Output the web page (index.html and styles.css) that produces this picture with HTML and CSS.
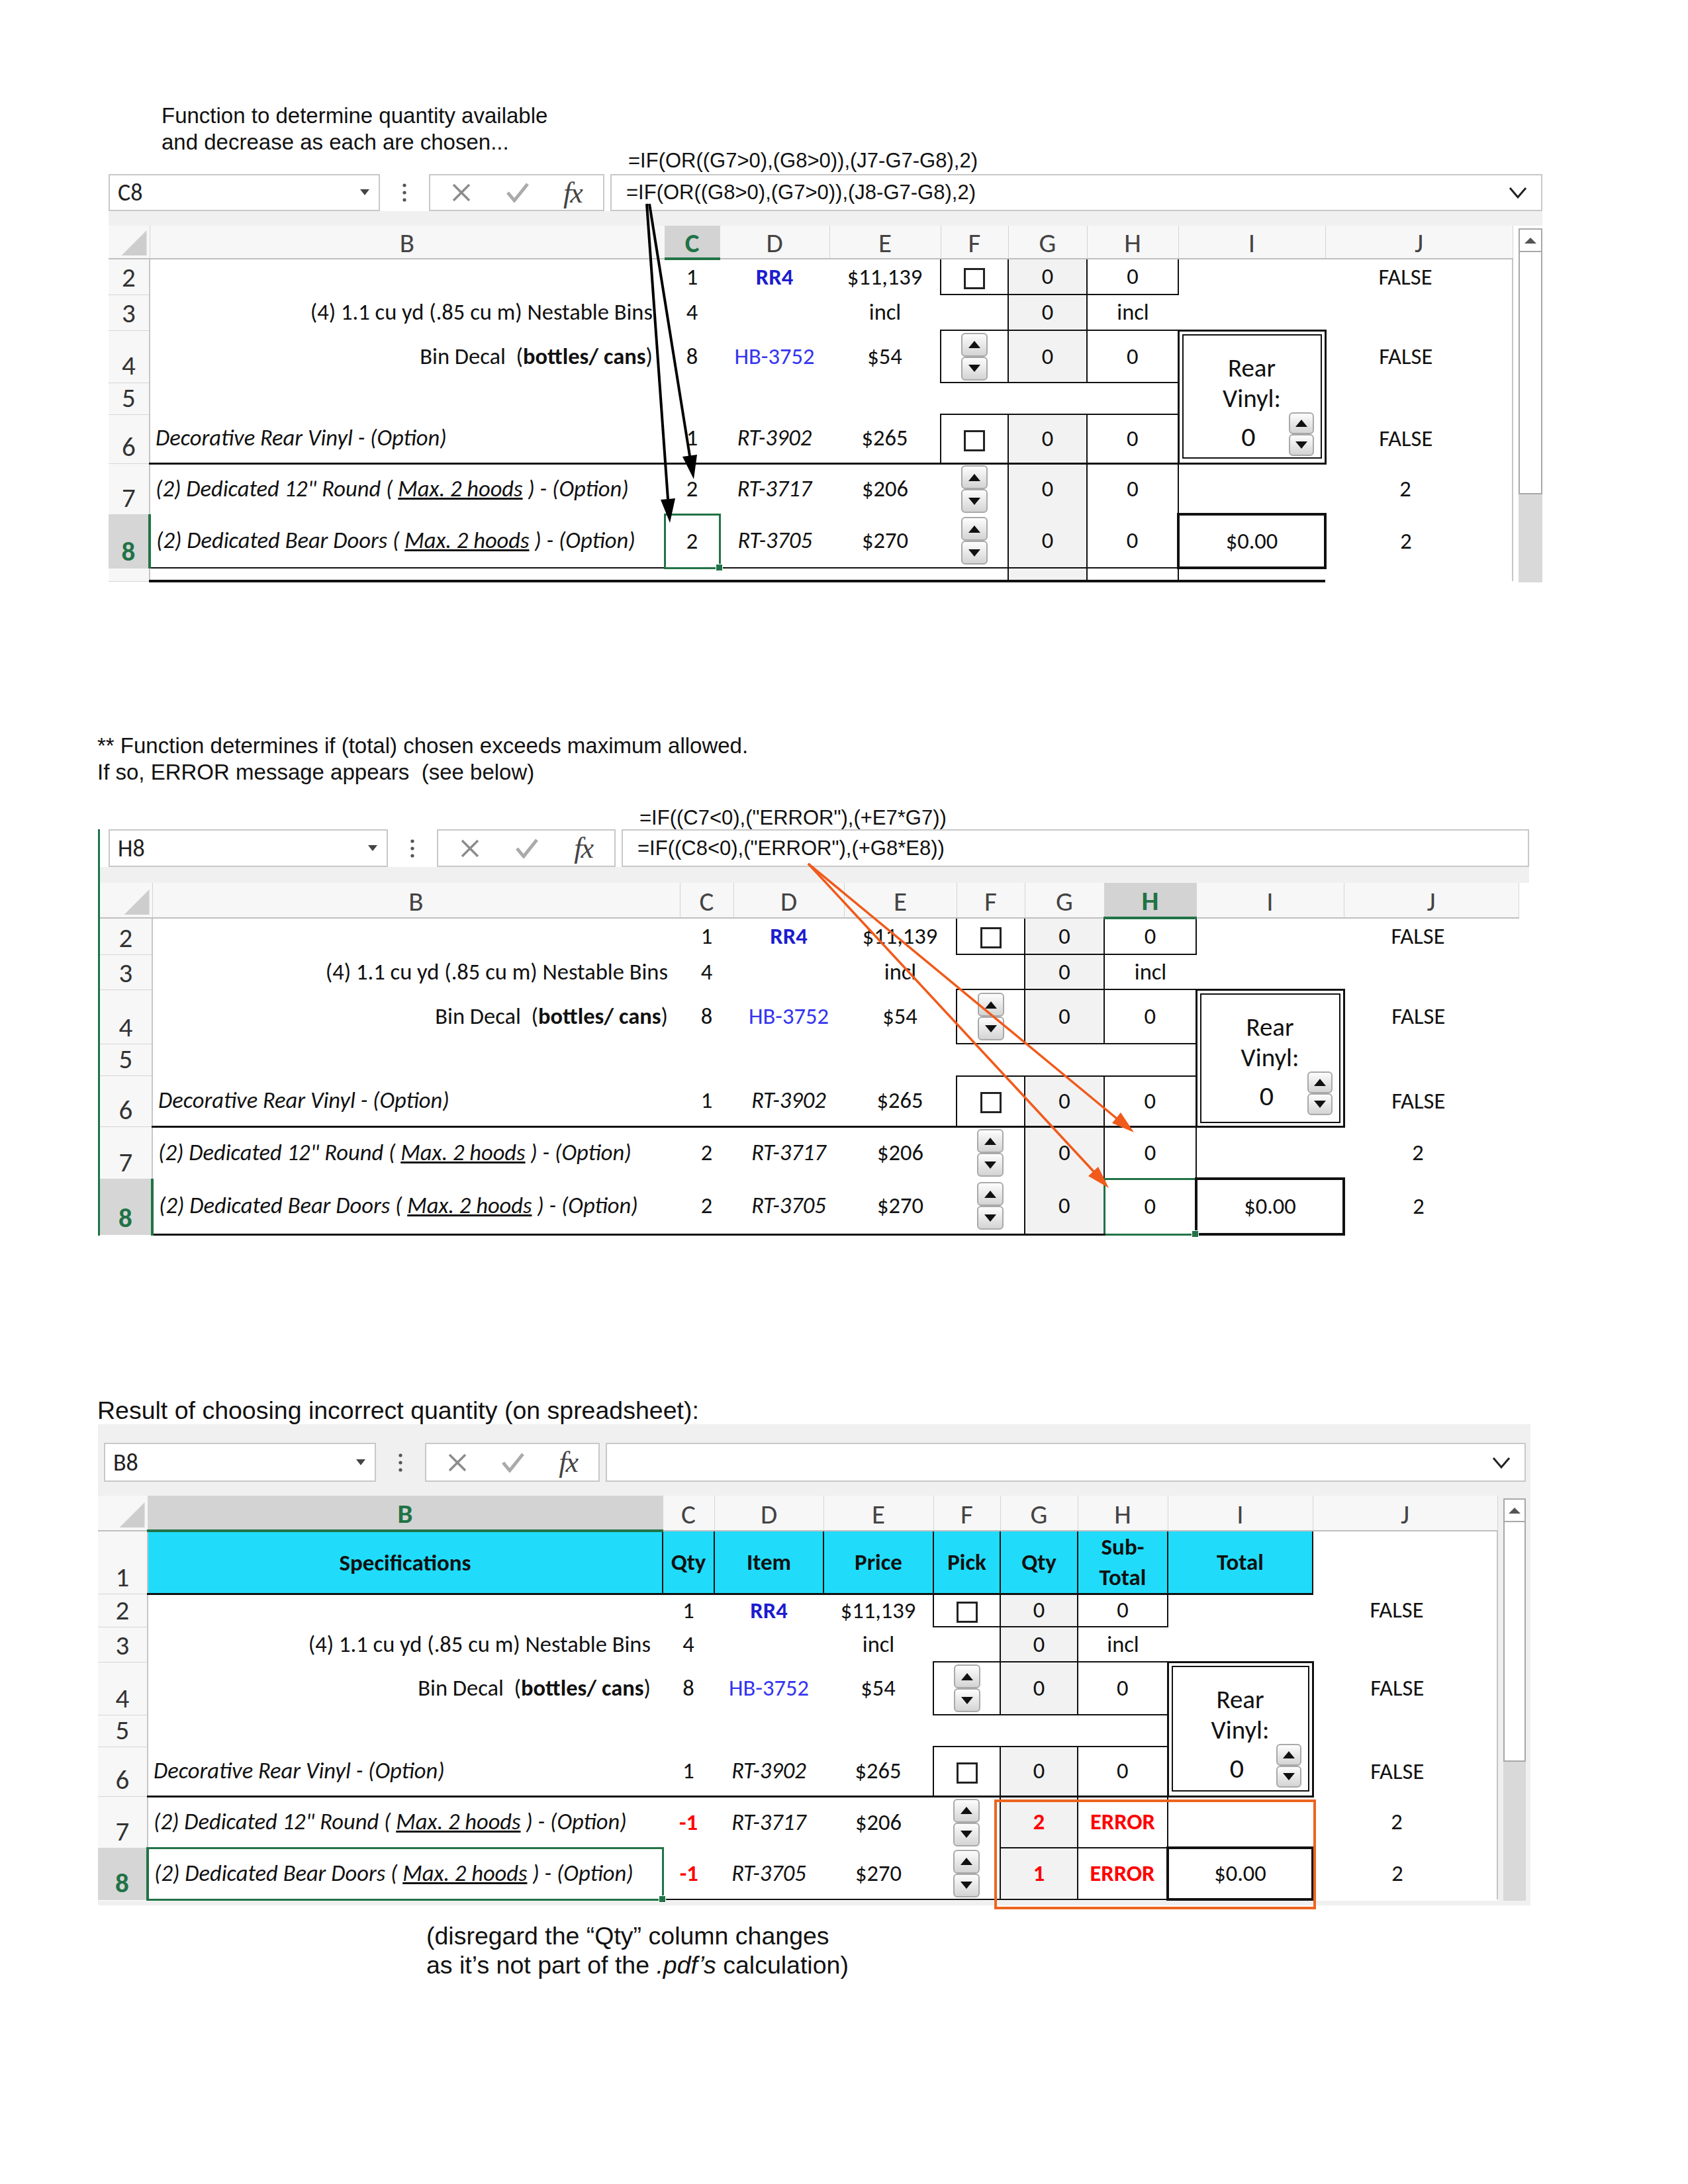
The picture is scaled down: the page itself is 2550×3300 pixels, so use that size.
FILE: index.html
```html
<!DOCTYPE html>
<html lang="en">
<head>
    <meta charset="UTF-8">
    <title>Quantity functions</title>
    <link rel="stylesheet" href="styles.css">
</head>
<body>
<div class="page">

    <!-- first sheet: quantity available -->
    <section class="s1">
        <p class="note note-1">Function to determine quantity available<br>and decrease as each are chosen...</p>
        <p class="fnote fnote-1">=IF(OR((G7&gt;0),(G8&gt;0)),(J7-G7-G8),2)</p>
        <div class="xl xl1">
            <div class="fbar">
                <div class="namebox"><span>C8</span><svg width="14" height="10" viewBox="0 0 14 10"><path d="M0 0H14L7 9Z" fill="#444"/></svg></div>
                <div class="dots"><svg width="6" height="30" viewBox="0 0 6 30"><circle cx="3" cy="4" r="2.6"/><circle cx="3" cy="15" r="2.6"/><circle cx="3" cy="26" r="2.6"/></svg></div>
                <div class="tools">
                    <svg width="30" height="30" viewBox="0 0 30 30"><path d="M3 3L27 27M27 3L3 27" stroke="#8c8c8c" stroke-width="3.5"/></svg>
                    <svg width="34" height="30" viewBox="0 0 34 30"><path d="M2 15L12 27L32 2" fill="none" stroke="#aaa" stroke-width="5"/></svg>
                    <span class="fx">fx</span>
                </div>
                <div class="finput"><span>=IF(OR((G8&gt;0),(G7&gt;0)),(J8-G7-G8),2)</span><svg width="30" height="20" viewBox="0 0 30 20"><path d="M3 3L15 17L27 3" fill="none" stroke="#222" stroke-width="3"/></svg></div>
            </div>
            <div class="strip"></div>
            <div class="grid">
                <table class="sheet">
                    <colgroup><col class="w-rn"><col class="w-b"><col class="w-c"><col class="w-d"><col class="w-e"><col class="w-f"><col class="w-g"><col class="w-h"><col class="w-i"><col class="w-j"></colgroup>
                    <tr class="hd"><th class="corner"><span class="tri"></span></th><th>B</th><th class="on">C</th><th>D</th><th>E</th><th>F</th><th>G</th><th>H</th><th>I</th><th class="je">J</th></tr>
                    <tr class="r2"><td class="rn">2</td><td></td><td>1</td><td class="rr4">RR4</td><td>$11,139</td><td class="f bl bb"><span class="chk"></span></td><td class="g bl bb">0</td><td class="bl br bb">0</td><td></td><td class="j">FALSE</td></tr>
                    <tr class="r3"><td class="rn">3</td><td class="spec">(4) 1.1 cu yd (.85 cu m) Nestable Bins</td><td>4</td><td></td><td>incl</td><td></td><td class="g bl br">0</td><td>incl</td><td></td><td class="j"></td></tr>
                    <tr class="r4"><td class="rn">4</td><td class="spec">Bin Decal&nbsp; (<b>bottles/ cans</b>)</td><td>8</td><td class="hb">HB-3752</td><td>$54</td><td class="f bl bt bb"><span class="spin"><i></i><i class="dn"></i></span></td><td class="g bl br bt bb">0</td><td class="bt bb">0</td>
                        <td class="vinyl" rowspan="3"><div class="vbox"><span>Rear</span><span>Vinyl:</span><div class="vrow"><span></span><span>0</span><span class="spin sm"><i></i><i class="dn"></i></span></div></div></td><td class="j">FALSE</td></tr>
                    <tr class="r5"><td class="rn">5</td><td></td><td></td><td></td><td></td><td></td><td></td><td></td><td class="j"></td></tr>
                    <tr class="r6"><td class="rn">6</td><td class="opt bk">Decorative Rear Vinyl - (Option)</td><td class="bk">1</td><td class="it bk">RT-3902</td><td class="bk">$265</td><td class="f bl bt bk"><span class="chk"></span></td><td class="g bl br bt bk">0</td><td class="bt bk">0</td><td class="j">FALSE</td></tr>
                    <tr class="r7"><td class="rn">7</td><td class="opt">(2) Dedicated 12" Round ( <u>Max. 2 hoods</u> ) - (Option)</td><td>2</td><td class="it">RT-3717</td><td>$206</td><td class="f"><span class="spin"><i></i><i class="dn"></i></span></td><td class="g bl br">0</td><td class="br">0</td><td></td><td class="j">2</td></tr>
                    <tr class="r8"><td class="rn on">8</td><td class="opt bb">(2) Dedicated Bear Doors ( <u>Max. 2 hoods</u> ) - (Option)</td><td class="sel bb">2</td><td class="it bb">RT-3705</td><td class="bb">$270</td><td class="f bb"><span class="spin"><i></i><i class="dn"></i></span></td><td class="g bl br bb">0</td><td class="bb">0</td><td class="tot">$0.00</td><td class="j">2</td></tr>
                    <tr class="r9"><td class="rn"></td><td class="b4"></td><td class="b4"></td><td class="b4"></td><td class="b4"></td><td class="b4"></td><td class="g bl br b4"></td><td class="br b4"></td><td class="b4"></td><td class="j"></td></tr>
                </table>
                <div class="vscroll"><div class="up"></div><div class="thumb"></div><div class="track"></div></div>
            </div>
        </div>
    </section>

    <!-- second sheet: error check -->
    <section class="s2">
        <p class="note note-2">** Function determines if (total) chosen exceeds maximum allowed.<br>If so, ERROR message appears&nbsp; (see below)</p>
        <p class="fnote fnote-2">=IF((C7&lt;0),("ERROR"),(+E7*G7))</p>
        <div class="xl xl2">
            <div class="fbar">
                <div class="namebox"><span>H8</span><svg width="14" height="10" viewBox="0 0 14 10"><path d="M0 0H14L7 9Z" fill="#444"/></svg></div>
                <div class="dots"><svg width="6" height="30" viewBox="0 0 6 30"><circle cx="3" cy="4" r="2.6"/><circle cx="3" cy="15" r="2.6"/><circle cx="3" cy="26" r="2.6"/></svg></div>
                <div class="tools">
                    <svg width="30" height="30" viewBox="0 0 30 30"><path d="M3 3L27 27M27 3L3 27" stroke="#8c8c8c" stroke-width="3.5"/></svg>
                    <svg width="34" height="30" viewBox="0 0 34 30"><path d="M2 15L12 27L32 2" fill="none" stroke="#aaa" stroke-width="5"/></svg>
                    <span class="fx">fx</span>
                </div>
                <div class="finput"><span>=IF((C8&lt;0),("ERROR"),(+G8*E8))</span></div>
            </div>
            <div class="strip"></div>
            <div class="grid">
                <table class="sheet">
                    <colgroup><col class="w-rn"><col class="w-b"><col class="w-c"><col class="w-d"><col class="w-e"><col class="w-f"><col class="w-g"><col class="w-h"><col class="w-i"><col class="w-j"></colgroup>
                    <tr class="hd"><th class="corner"><span class="tri"></span></th><th>B</th><th>C</th><th>D</th><th>E</th><th>F</th><th>G</th><th class="on">H</th><th>I</th><th>J</th></tr>
                    <tr class="r2"><td class="rn">2</td><td></td><td>1</td><td class="rr4">RR4</td><td>$11,139</td><td class="f bl bb"><span class="chk"></span></td><td class="g bl bb">0</td><td class="bl br bb">0</td><td></td><td class="j">FALSE</td></tr>
                    <tr class="r3"><td class="rn">3</td><td class="spec">(4) 1.1 cu yd (.85 cu m) Nestable Bins</td><td>4</td><td></td><td>incl</td><td></td><td class="g bl br">0</td><td>incl</td><td></td><td class="j"></td></tr>
                    <tr class="r4"><td class="rn">4</td><td class="spec">Bin Decal&nbsp; (<b>bottles/ cans</b>)</td><td>8</td><td class="hb">HB-3752</td><td>$54</td><td class="f bl bt bb"><span class="spin"><i></i><i class="dn"></i></span></td><td class="g bl br bt bb">0</td><td class="bt bb">0</td>
                        <td class="vinyl" rowspan="3"><div class="vbox"><span>Rear</span><span>Vinyl:</span><div class="vrow"><span></span><span>0</span><span class="spin sm"><i></i><i class="dn"></i></span></div></div></td><td class="j">FALSE</td></tr>
                    <tr class="r5"><td class="rn">5</td><td></td><td></td><td></td><td></td><td></td><td></td><td></td><td class="j"></td></tr>
                    <tr class="r6"><td class="rn">6</td><td class="opt bk">Decorative Rear Vinyl - (Option)</td><td class="bk">1</td><td class="it bk">RT-3902</td><td class="bk">$265</td><td class="f bl bt bk"><span class="chk"></span></td><td class="g bl br bt bk">0</td><td class="bt bk">0</td><td class="j">FALSE</td></tr>
                    <tr class="r7"><td class="rn">7</td><td class="opt">(2) Dedicated 12" Round ( <u>Max. 2 hoods</u> ) - (Option)</td><td>2</td><td class="it">RT-3717</td><td>$206</td><td class="f"><span class="spin"><i></i><i class="dn"></i></span></td><td class="g bl br">0</td><td class="br">0</td><td></td><td class="j">2</td></tr>
                    <tr class="r8"><td class="rn on">8</td><td class="opt b3">(2) Dedicated Bear Doors ( <u>Max. 2 hoods</u> ) - (Option)</td><td class="b3">2</td><td class="it b3">RT-3705</td><td class="b3">$270</td><td class="f b3"><span class="spin"><i></i><i class="dn"></i></span></td><td class="g bl b3">0</td><td class="sel">0</td><td class="tot">$0.00</td><td class="j">2</td></tr>
                </table>
            </div>
        </div>
    </section>

    <!-- third sheet: result with wrong quantity -->
    <section class="s3">
        <p class="caption">Result of choosing incorrect quantity (on spreadsheet):</p>
        <div class="xl xl3">
            <div class="fbar">
                <div class="namebox"><span>B8</span><svg width="14" height="10" viewBox="0 0 14 10"><path d="M0 0H14L7 9Z" fill="#444"/></svg></div>
                <div class="dots"><svg width="6" height="30" viewBox="0 0 6 30"><circle cx="3" cy="4" r="2.6"/><circle cx="3" cy="15" r="2.6"/><circle cx="3" cy="26" r="2.6"/></svg></div>
                <div class="tools">
                    <svg width="30" height="30" viewBox="0 0 30 30"><path d="M3 3L27 27M27 3L3 27" stroke="#8c8c8c" stroke-width="3.5"/></svg>
                    <svg width="34" height="30" viewBox="0 0 34 30"><path d="M2 15L12 27L32 2" fill="none" stroke="#aaa" stroke-width="5"/></svg>
                    <span class="fx">fx</span>
                </div>
                <div class="finput"><span></span><svg width="30" height="20" viewBox="0 0 30 20"><path d="M3 3L15 17L27 3" fill="none" stroke="#222" stroke-width="3"/></svg></div>
            </div>
            <div class="strip"></div>
            <div class="grid">
                <table class="sheet">
                    <colgroup><col class="w-rn"><col class="w-b"><col class="w-c"><col class="w-d"><col class="w-e"><col class="w-f"><col class="w-g"><col class="w-h"><col class="w-i"><col class="w-j"></colgroup>
                    <tr class="hd"><th class="corner"><span class="tri"></span></th><th class="on">B</th><th>C</th><th>D</th><th>E</th><th>F</th><th>G</th><th>H</th><th>I</th><th>J</th></tr>
                    <tr class="r1"><td class="rn">1</td><td class="cy">Specifications</td><td class="cy">Qty</td><td class="cy">Item</td><td class="cy">Price</td><td class="cy">Pick</td><td class="cy">Qty</td><td class="cy">Sub-<br>Total</td><td class="cy">Total</td><td class="j"></td></tr>
                    <tr class="r2"><td class="rn">2</td><td></td><td>1</td><td class="rr4">RR4</td><td>$11,139</td><td class="f bl bb"><span class="chk"></span></td><td class="g bl bb">0</td><td class="bl br bb">0</td><td></td><td class="j">FALSE</td></tr>
                    <tr class="r3"><td class="rn">3</td><td class="spec">(4) 1.1 cu yd (.85 cu m) Nestable Bins</td><td>4</td><td></td><td>incl</td><td></td><td class="g bl br">0</td><td>incl</td><td></td><td class="j"></td></tr>
                    <tr class="r4"><td class="rn">4</td><td class="spec">Bin Decal&nbsp; (<b>bottles/ cans</b>)</td><td>8</td><td class="hb">HB-3752</td><td>$54</td><td class="f bl bt bb"><span class="spin"><i></i><i class="dn"></i></span></td><td class="g bl br bt bb">0</td><td class="bt bb">0</td>
                        <td class="vinyl" rowspan="3"><div class="vbox"><span>Rear</span><span>Vinyl:</span><div class="vrow"><span></span><span>0</span><span class="spin sm"><i></i><i class="dn"></i></span></div></div></td><td class="j">FALSE</td></tr>
                    <tr class="r5"><td class="rn">5</td><td></td><td></td><td></td><td></td><td></td><td></td><td></td><td class="j"></td></tr>
                    <tr class="r6"><td class="rn">6</td><td class="opt bk">Decorative Rear Vinyl - (Option)</td><td class="bk">1</td><td class="it bk">RT-3902</td><td class="bk">$265</td><td class="f bl bt bk"><span class="chk"></span></td><td class="g bl br bt bk">0</td><td class="bt bk">0</td><td class="j">FALSE</td></tr>
                    <tr class="r7"><td class="rn">7</td><td class="opt">(2) Dedicated 12" Round ( <u>Max. 2 hoods</u> ) - (Option)</td><td class="red">-1</td><td class="it">RT-3717</td><td>$206</td><td class="f"><span class="spin"><i></i><i class="dn"></i></span></td><td class="g bl br red">2</td><td class="br red">ERROR</td><td></td><td class="j">2</td></tr>
                    <tr class="r8"><td class="rn on">8</td><td class="opt sel">(2) Dedicated Bear Doors ( <u>Max. 2 hoods</u> ) - (Option)</td><td class="red bb">-1</td><td class="it bb">RT-3705</td><td class="bb">$270</td><td class="f bb"><span class="spin"><i></i><i class="dn"></i></span></td><td class="g bl br bb bt red">1</td><td class="bb bt red">ERROR</td><td class="tot">$0.00</td><td class="j">2</td></tr>
                </table>
                <div class="vscroll"><div class="up"></div><div class="thumb"></div><div class="track"></div></div>
            </div>
        </div>
        <p class="after">(disregard the “Qty” column changes<br>as it’s not part of the <i>.pdf’s</i> calculation)</p>
    </section>

    <!-- arrows and highlight drawn over the sheets -->
    <svg class="marks" width="2550" height="3300" viewBox="0 0 2550 3300">
        <g stroke="#000" stroke-width="4" fill="#000">
            <line x1="981" y1="308" x2="1042" y2="689"/>
            <polygon points="1048,724 1053,687 1031,690" stroke="none"/>
            <line x1="977" y1="308" x2="1009" y2="754"/>
            <polygon points="1012,790 1020,753 998,755" stroke="none"/>
        </g>
        <g stroke="#f05a1a" stroke-width="3.5" fill="#f05a1a">
            <line x1="1221" y1="1305" x2="1687" y2="1690"/>
            <polygon points="1713,1711 1693,1681 1680,1697" stroke="none"/>
            <line x1="1221" y1="1305" x2="1652" y2="1770"/>
            <polygon points="1675,1795 1659,1763 1644,1777" stroke="none"/>
        </g>
        <rect x="1504" y="2721" width="482" height="162" fill="none" stroke="#ec6520" stroke-width="4"/>
    </svg>
</div>
</body>
</html>
```

FILE: styles.css
```css
* {
    margin: 0;
    padding: 0;
    box-sizing: border-box;
}

body {
    background: #fff;
    color: #111;
    font-family: "Liberation Sans", Arial, sans-serif;
}

.page {
    position: relative;
    width: 2550px;
    height: 3300px;
    overflow: hidden;
}

/* annotation texts */
.note {
    font-size: 33px;
    line-height: 40px;
}

.fnote {
    font-size: 31px;
    white-space: nowrap;
}

.s1 {
    padding-top: 155px;
}

.note-1 {
    margin-left: 244px;
}

.fnote-1 {
    margin: -11px 0 0 949px;
    line-height: 38px;
}

.s2 {
    margin-top: 227px;
}

.note-2 {
    margin-left: 147px;
}

.fnote-2 {
    margin: 31px 0 0 966px;
    line-height: 35px;
}

.s3 {
    margin-top: 242px;
}

.caption {
    margin-left: 147px;
    font-size: 37.5px;
    line-height: 44px;
}

.after {
    margin: 24px 0 0 644px;
    font-size: 37.5px;
    line-height: 44px;
}

/* excel window */
.xl {
    font-family: "Liberation Sans Narrow", Carlito, "DejaVu Sans Condensed", "Liberation Sans", sans-serif;
}

.xl1 {
    margin: 1px 0 0 164px;
    width: 2166px;
}

.xl2 {
    margin-left: 148px;
    width: 2162px;
    border-left: 3px solid #217346;
}

.xl3 {
    margin: -1px 0 0 148px;
    width: 2164px;
    padding: 28px 7px 7px 0;
    background: #f0f0f0;
}

.fbar {
    display: flex;
    height: 56px;
}

.xl2 .fbar {
    height: 57px;
    padding-left: 13px;
}

.xl3 .fbar {
    height: 59px;
    padding-left: 9px;
}

.namebox {
    width: 410px;
    display: flex;
    align-items: center;
    justify-content: space-between;
    padding: 0 14px 0 12px;
    background: #fff;
    border: 2px solid #c8c8c8;
    font-size: 36px;
    color: #222;
}

.xl2 .namebox {
    width: 422px;
}

.xl3 .namebox {
    width: 411px;
}

.dots {
    width: 74px;
    display: flex;
    align-items: center;
    justify-content: center;
    fill: #555;
}

.tools {
    width: 265px;
    display: flex;
    align-items: center;
    justify-content: space-around;
    padding: 0 6px;
    background: #fff;
    border: 2px solid #c8c8c8;
}

.xl2 .tools {
    width: 270px;
}

.xl3 .tools {
    width: 264px;
}

.fx {
    font-family: "Liberation Serif", serif;
    font-style: italic;
    font-size: 44px;
    color: #444;
    letter-spacing: -2px;
}

.finput {
    flex: 1;
    margin-left: 9px;
    display: flex;
    align-items: center;
    justify-content: space-between;
    padding: 0 20px 0 22px;
    background: #fff;
    border: 2px solid #c8c8c8;
    font-family: "Liberation Sans", Arial, sans-serif;
    font-size: 31px;
    color: #111;
    white-space: nowrap;
}

.strip {
    height: 22px;
    background: #f0f0f0;
}

.xl2 .strip {
    height: 24px;
}

.xl3 .strip {
    height: 21px;
}

.grid {
    display: flex;
    align-items: stretch;
    background: #fff;
}

.xl3 .grid {
    background: #f0f0f0;
}

/* sheet grid */
.sheet {
    width: 2121px;
    flex: none;
    border-collapse: collapse;
    table-layout: fixed;
    background: #fff;
    font-size: 34.5px;
    line-height: 1.1;
}

.xl2 .sheet {
    width: 2143px;
}

.xl3 .sheet {
    width: 2114px;
}

.sheet td {
    padding: 0 8px;
    text-align: center;
    vertical-align: middle;
    white-space: nowrap;
    overflow: visible;
}

.sheet th {
    height: 50px;
    font-size: 41px;
    font-weight: normal;
    color: #444;
    background: #f7f7f7;
    border-right: 1px solid #d4d4d4;
    border-bottom: 2px solid #bfbfbf;
    line-height: 1;
    padding-top: 4px;
}

.sheet th.on {
    background: #d3d3d3;
    color: #217346;
    font-weight: bold;
    border-bottom: 4px solid #217346;
}

.sheet th.corner {
    vertical-align: bottom;
    padding: 0 4px 4px 0;
}

.tri {
    display: block;
    width: 38px;
    height: 38px;
    margin-left: auto;
    background: #cdcdcd;
    clip-path: polygon(100% 0, 100% 100%, 0 100%);
}

.sheet td.rn {
    font-size: 41px;
    color: #333;
    background: #f7f7f7;
    border-right: 2px solid #c6c6c6;
    border-bottom: 1px solid #d6d6d6;
    vertical-align: bottom;
    padding: 0 0 2px;
}

.sheet td.rn.on {
    background: #d6d6d6;
    color: #217346;
    font-weight: bold;
    border-right: 4px solid #217346;
}

.w-rn { width: 62px; }
.w-b { width: 778px; }
.w-c { width: 83px; }
.w-d { width: 166px; }
.w-e { width: 168px; }
.w-f { width: 102px; }
.w-g { width: 119px; }
.w-h { width: 138px; }
.w-i { width: 222px; }
.w-j { width: 283px; }

.xl2 .w-rn { width: 79px; }
.xl2 .w-b { width: 797px; }
.xl2 .w-c { width: 81px; }
.xl2 .w-d { width: 167px; }
.xl2 .w-e { width: 170px; }
.xl2 .w-f { width: 103px; }
.xl2 .w-g { width: 120px; }
.xl2 .w-h { width: 139px; }
.xl2 .w-i { width: 223px; }
.xl2 .w-j { width: 264px; }

.xl3 .w-rn { width: 75px; }
.xl3 .w-b { width: 778px; }
.xl3 .w-c { width: 78px; }
.xl3 .w-d { width: 165px; }
.xl3 .w-e { width: 166px; }
.xl3 .w-f { width: 101px; }
.xl3 .w-g { width: 117px; }
.xl3 .w-h { width: 136px; }
.xl3 .w-i { width: 219px; }
.xl3 .w-j { width: 279px; }

/* row heights per sheet */
.xl1 .r2 { height: 54px; }
.xl1 .r3 { height: 54px; }
.xl1 .r4 { height: 79px; }
.xl1 .r5 { height: 45px; }
.xl1 .r6 { height: 74px; }
.xl1 .r7 { height: 77px; }
.xl1 .r8 { height: 81px; }
.xl1 .r9 { height: 20px; }

.xl2 .sheet th { height: 53px; }
.xl2 .r2 { height: 55px; }
.xl2 .r3 { height: 53px; }
.xl2 .r4 { height: 82px; }
.xl2 .r5 { height: 46px; }
.xl2 .r6 { height: 76px; }
.xl2 .r7 { height: 79px; }
.xl2 .r8 { height: 84px; }

.xl3 .sheet th { height: 53px; }
.xl3 .r1 { height: 95px; }
.xl3 .r2 { height: 50px; }
.xl3 .r3 { height: 53px; }
.xl3 .r4 { height: 80px; }
.xl3 .r5 { height: 45px; }
.xl3 .r6 { height: 75px; }
.xl3 .r7 { height: 78px; }
.xl3 .r8 { height: 78px; }

/* cell formats */
.sheet td.spec {
    text-align: right;
    padding-right: 18px;
}

.sheet td.opt {
    text-align: left;
    font-style: italic;
}

.sheet td.it {
    font-style: italic;
}

.sheet td.j {
    padding-right: 48px;
    border-right: 2px solid #c4c4c4;
}

.xl2 .sheet td.j {
    border-right: 0;
}

.xl3 .sheet td.j {
    padding-right: 32px;
}

.rr4 {
    color: #1c1ccf;
    font-weight: bold;
}

.hb {
    color: #3434f0;
}

.red {
    color: #f00;
    font-weight: bold;
}

.g {
    background: #f2f2f2;
}

.sheet td.f {
    padding: 0;
}

.bl { border-left: 2px solid #111; }
.br { border-right: 2px solid #111; }
.bt { border-top: 2px solid #111; }
.bb { border-bottom: 2px solid #111; }
.bk { border-bottom: 3px solid #111; }
.b3 { border-bottom: 3px solid #111; }
.b4 { border-bottom: 4px solid #111; }

.sheet td.sel {
    position: relative;
    border: 3px solid #217346;
}

.sheet td.sel::after {
    content: '';
    position: absolute;
    right: -6px;
    bottom: -6px;
    width: 9px;
    height: 9px;
    background: #217346;
    border: 1px solid #fff;
}

.sheet td.tot {
    border: 4px solid #111;
}

.sheet td.cy {
    background: #20dcfa;
    font-weight: bold;
    font-size: 35px;
    line-height: 46px;
    border-left: 2px solid #111;
    border-right: 2px solid #111;
    border-bottom: 3px solid #111;
    padding: 0 4px;
}

/* form controls */
.chk {
    display: inline-block;
    width: 32px;
    height: 32px;
    vertical-align: middle;
    background: #fff;
    border: 3px solid #222;
}

.spin {
    display: inline-flex;
    flex-direction: column;
    vertical-align: middle;
}

.spin i {
    width: 40px;
    height: 36px;
    display: flex;
    align-items: center;
    justify-content: center;
    border: 2px solid #a9a9a9;
    border-radius: 6px;
    background: linear-gradient(#fdfdfd, #d4d4d4);
}

.spin i::after {
    content: '';
    border-left: 9px solid transparent;
    border-right: 9px solid transparent;
    border-bottom: 11px solid #111;
}

.spin i.dn::after {
    border-bottom: 0;
    border-top: 11px solid #111;
}

.spin.sm i {
    width: 38px;
    height: 33px;
}

.sheet td.vinyl {
    border: 3px solid #111;
    padding: 4px;
    vertical-align: top;
}

.vbox {
    height: 188px;
    display: flex;
    flex-direction: column;
    align-items: center;
    padding-top: 26px;
    border: 2px solid #111;
    font-size: 39px;
    line-height: 46px;
}

.xl2 .vbox {
    height: 196px;
}

.xl3 .vbox {
    height: 190px;
}

.vrow {
    width: 100%;
    display: grid;
    grid-template-columns: 1fr auto 1fr;
    align-items: center;
    padding-right: 10px;
    margin-top: -2px;
}

.vrow .spin {
    justify-self: end;
}

.vrow span:nth-child(2) {
    font-size: 42px;
    padding-top: 8px;
}

/* vertical scroll bar */
.vscroll {
    width: 36px;
    margin-left: 8px;
    display: flex;
    flex-direction: column;
    padding-top: 4px;
}

.vscroll .up {
    height: 36px;
    display: flex;
    align-items: center;
    justify-content: center;
    background: #fff;
    border: 2px solid #a8a8a8;
}

.vscroll .up::after {
    content: '';
    border-left: 9px solid transparent;
    border-right: 9px solid transparent;
    border-bottom: 9px solid #555;
}

.vscroll .thumb {
    height: 366px;
    background: #fff;
    border: 2px solid #a8a8a8;
    border-top: 0;
}

.xl3 .vscroll .thumb {
    height: 362px;
}

.vscroll .track {
    flex: 1;
    background: #d9d9d9;
}

.marks {
    position: absolute;
    top: 0;
    left: 0;
    pointer-events: none;
}
```
